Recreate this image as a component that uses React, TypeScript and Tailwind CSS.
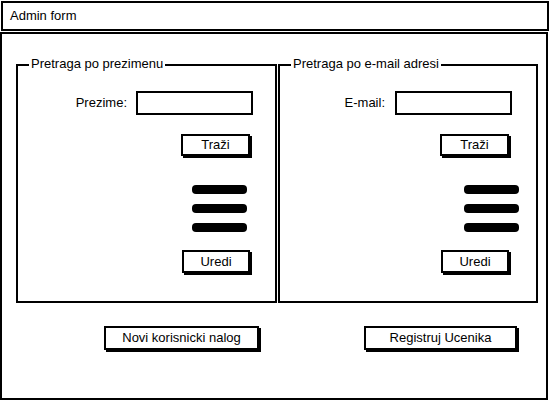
import React from 'react'

const FONT = { fontFamily: '"Liberation Sans", Arial, sans-serif' }

function SketchButton({ label, className = '' }: { label: string; className?: string }) {
  return (
    <div
      className={`flex items-center justify-center border-2 border-black bg-white text-[13px] text-black shadow-[2px_2px_0_#000] ${className}`}
    >
      {label}
    </div>
  )
}

function Bars({ className = '' }: { className?: string }) {
  return (
    <div className={`flex flex-col gap-[10px] ${className}`}>
      <div className="h-[9px] w-[55px] rounded-[4px] bg-black" />
      <div className="h-[9px] w-[55px] rounded-[4px] bg-black" />
      <div className="h-[9px] w-[55px] rounded-[4px] bg-black" />
    </div>
  )
}

interface SearchBoxProps {
  title: string
  field: string
  width: string
  inputMr: string
  btnMr: string
  barsMr: string
  labelGap: string
}

function SearchBox({ title, field, width, inputMr, btnMr, barsMr, labelGap }: SearchBoxProps) {
  return (
    <div className={`relative h-[239px] border-2 border-black ${width}`}>
      {/* legend over the top border */}
      <span className="absolute -top-[10px] left-[11px] bg-white px-[2px] text-[13px] leading-[16px] text-black">
        {title}
      </span>
      <div className="flex flex-col items-end pt-[25px]">
        <div className={`flex items-center ${inputMr}`}>
          <span className={`text-[13px] text-black ${labelGap}`}>{field}</span>
          <div className="h-[24px] w-[117px] border-2 border-black bg-white" />
        </div>
        <SketchButton label="Traži" className={`mt-[19px] h-[22px] w-[69px] ${btnMr}`} />
        <Bars className={`mt-[29px] ${barsMr}`} />
        <SketchButton label="Uredi" className={`mt-[18px] h-[23px] w-[68px] ${btnMr}`} />
      </div>
    </div>
  )
}

export default function App() {
  return (
    <div className="h-[400px] w-[550px] overflow-hidden bg-white" style={FONT}>
      {/* title bar */}
      <div className="ml-[1px] mt-[1px] flex h-[30px] w-[548px] items-center border-2 border-black pl-[7px] text-[13px] text-black">
        Admin form
      </div>

      {/* main panel */}
      <div className="mt-[1px] h-[368px] w-[548px] border-2 border-black">
        <div className="ml-[14px] mt-[30px] flex gap-[1px]">
          <SearchBox
            title="Pretraga po prezimenu"
            field="Prezime:"
            width="w-[261px]"
            inputMr="mr-[22px]"
            btnMr="mr-[25px]"
            barsMr="mr-[28px]"
            labelGap="mr-[9px]"
          />
          <SearchBox
            title="Pretraga po e-mail adresi"
            field="E-mail:"
            width="w-[260px]"
            inputMr="mr-[24px]"
            btnMr="mr-[27px]"
            barsMr="mr-[17px]"
            labelGap="mr-[10px]"
          />
        </div>

        <div className="mt-[23px] flex">
          <SketchButton label="Novi korisnicki nalog" className="ml-[102px] h-[24px] w-[155px]" />
          <SketchButton label="Registruj Ucenika" className="ml-[105px] h-[24px] w-[153px]" />
        </div>
      </div>
    </div>
  )
}
